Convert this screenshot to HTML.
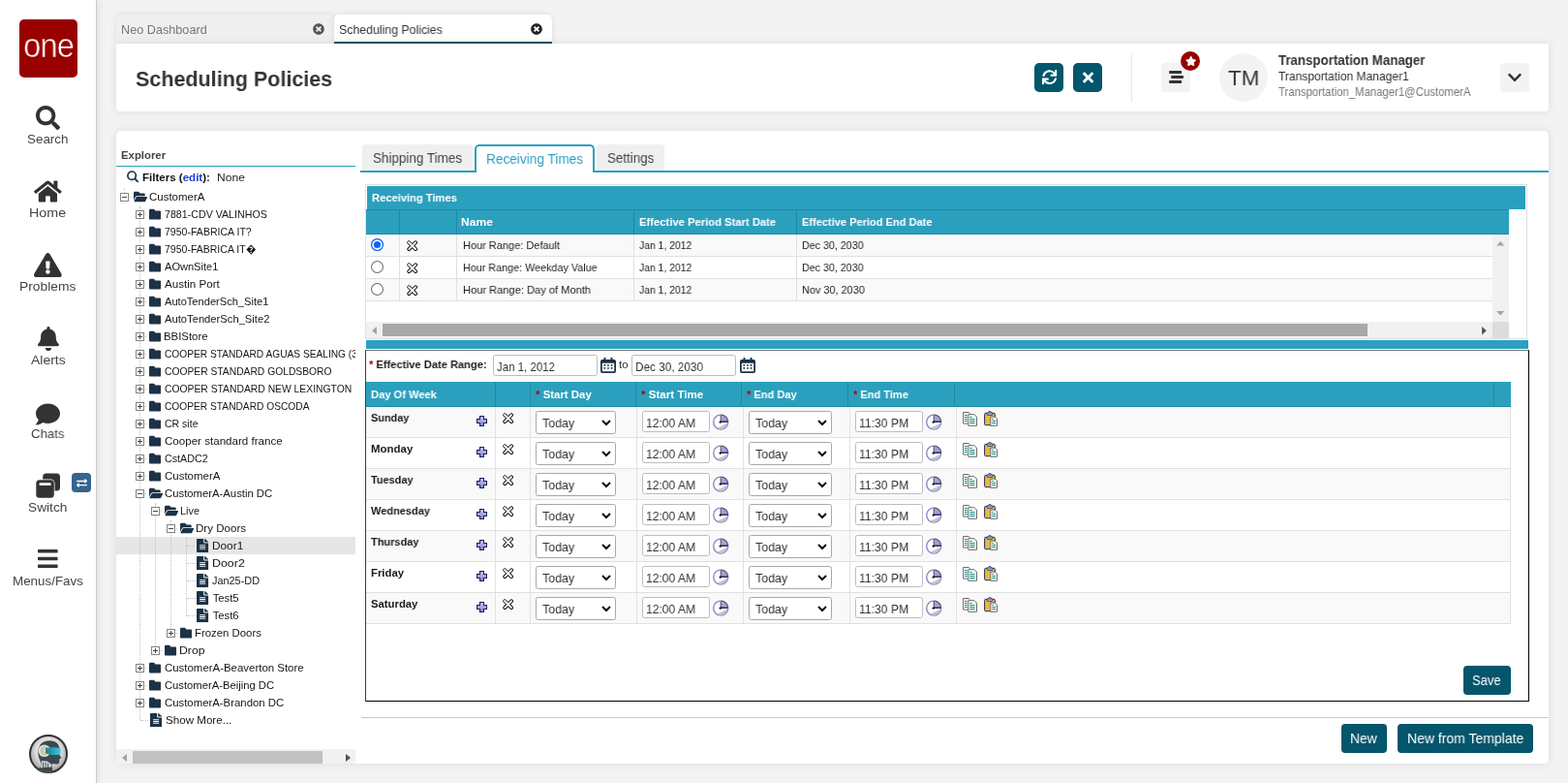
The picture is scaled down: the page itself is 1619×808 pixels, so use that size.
<!DOCTYPE html><html lang="en"><head><meta charset="utf-8"><title>Scheduling Policies</title><style>*{box-sizing:border-box}
html,body{margin:0;padding:0}
html{background:#f3f3f3}
body{width:1619px;height:808px;background:#f3f3f3;font-family:"Liberation Sans",sans-serif;color:#333;font-size:11px}
#app{position:relative;width:1619px;height:808px;overflow:hidden;background:#f3f3f3}
.a{position:absolute}
.ic{position:absolute;display:block;overflow:visible}
.t{position:absolute;white-space:pre;line-height:1;transform-origin:0 0;will-change:transform}
.tl{position:absolute;white-space:pre;line-height:1;transform-origin:0 0}
#side{left:0;top:0;width:100px;height:808px;background:#fff;border-right:1px solid #c9c9c9;box-shadow:2px 0 8px rgba(0,0,0,.08)}
#logo{left:20px;top:20px;width:60px;height:60px;background:#990000;border-radius:5px}
.tab{position:absolute;top:15px;height:30px;border-radius:5px 5px 0 0;font-size:12px}
#hdr{left:120px;top:45px;width:1479px;height:70px;background:#fff;border-radius:0 0 4px 4px;box-shadow:0 0 10px rgba(0,0,0,.10)}
#main{left:120px;top:135px;width:1479px;height:653px;background:#fff;border-radius:5px;box-shadow:0 0 10px rgba(0,0,0,.10)}
.tg{position:absolute;width:9px;height:9px;border:1px solid #848484;background:#fff}
.tg:before{content:"";position:absolute;left:1px;top:3px;width:5px;height:1px;background:#444}
.tg.p:after{content:"";position:absolute;left:3px;top:1px;width:1px;height:5px;background:#444}
.vl{position:absolute;width:0;border-left:1px dotted #c2c2c2}
.hl{position:absolute;height:0;border-top:1px dotted #c2c2c2}
.cs{position:absolute;width:1px;background:#2188a3}
.row{position:absolute;border-bottom:1px solid #e0e0e0}
</style></head><body>
<div id="app">
<svg width="0" height="0" style="position:absolute"><defs><symbol id="i-search" viewBox="0 0 512 512" preserveAspectRatio="none"><path d="M505 442.7L405.3 343c-4.5-4.5-10.6-7-17-7H372c27.6-35.3 44-79.7 44-128C416 93.1 322.9 0 208 0S0 93.1 0 208s93.1 208 208 208c48.3 0 92.7-16.4 128-44v16.3c0 6.4 2.5 12.5 7 17l99.7 99.7c9.4 9.4 24.6 9.4 33.9 0l28.3-28.3c9.4-9.4 9.4-24.6.1-34zM208 336c-70.7 0-128-57.2-128-128 0-70.7 57.2-128 128-128 70.7 0 128 57.2 128 128 0 70.7-57.2 128-128 128z"/></symbol><symbol id="i-home" viewBox="0 0 576 512" preserveAspectRatio="none"><path d="M280.37 148.26L96 300.11V464a16 16 0 0 0 16 16l112.06-.29a16 16 0 0 0 15.92-16V368a16 16 0 0 1 16-16h64a16 16 0 0 1 16 16v95.64a16 16 0 0 0 16 16.05L464 480a16 16 0 0 0 16-16V300L295.67 148.26a12.19 12.19 0 0 0-15.3 0zM571.6 251.47L488 182.56V44.05a12 12 0 0 0-12-12h-56a12 12 0 0 0-12 12v72.61L318.47 43a48 48 0 0 0-61 0L4.34 251.47a12 12 0 0 0-1.6 16.9l25.5 31A12 12 0 0 0 45.15 301l235.22-193.74a12.19 12.19 0 0 1 15.3 0L530.9 301a12 12 0 0 0 16.9-1.6l25.5-31a12 12 0 0 0-1.7-16.93z"/></symbol><symbol id="i-warn" viewBox="0 0 576 512" preserveAspectRatio="none"><path d="M569.517 440.013C587.975 472.007 564.806 512 527.94 512H48.054c-36.937 0-59.999-40.055-41.577-71.987L246.423 23.985c18.467-32.009 64.72-31.951 83.154 0l239.94 416.028zM288 354c-25.405 0-46 20.595-46 46s20.595 46 46 46 46-20.595 46-46-20.595-46-46-46zm-43.673-165.346l7.418 136c.347 6.364 5.609 11.346 11.982 11.346h48.546c6.373 0 11.635-4.982 11.982-11.346l7.418-136c.375-6.874-5.098-12.654-11.982-12.654h-63.383c-6.884 0-12.356 5.78-11.981 12.654z"/></symbol><symbol id="i-bell" viewBox="0 0 448 512" preserveAspectRatio="none"><path d="M224 512c35.32 0 63.97-28.65 63.97-64H160.03c0 35.35 28.65 64 63.97 64zm215.39-149.71c-19.32-20.76-55.47-51.99-55.47-154.29 0-77.7-54.48-139.9-127.94-155.16V32c0-17.67-14.32-32-31.98-32s-31.98 14.33-31.98 32v20.84C118.56 68.1 64.08 130.3 64.08 208c0 102.3-36.15 133.53-55.47 154.29-6 6.45-8.66 14.16-8.61 21.71.11 16.4 12.98 32 32.1 32h383.8c19.12 0 32-15.6 32.1-32 .05-7.55-2.61-15.27-8.61-21.71z"/></symbol><symbol id="i-comment" viewBox="0 0 512 512" preserveAspectRatio="none"><path d="M256 32C114.6 32 0 125.1 0 240c0 49.6 21.4 95 57 130.7C44.5 421.1 2.7 466 2.2 466.5c-2.2 2.3-2.8 5.7-1.5 8.7S4.8 480 8 480c66.3 0 116-31.8 140.6-51.4 32.7 12.3 69 19.4 107.4 19.4 141.4 0 256-93.1 256-208S397.4 32 256 32z"/></symbol><symbol id="i-bars" viewBox="0 0 448 512" preserveAspectRatio="none"><path d="M16 132h416c8.837 0 16-7.163 16-16V76c0-8.837-7.163-16-16-16H16C7.163 60 0 67.163 0 76v40c0 8.837 7.163 16 16 16zm0 160h416c8.837 0 16-7.163 16-16v-40c0-8.837-7.163-16-16-16H16c-8.837 0-16 7.163-16 16v40c0 8.837 7.163 16 16 16zm0 160h416c8.837 0 16-7.163 16-16v-40c0-8.837-7.163-16-16-16H16c-8.837 0-16 7.163-16 16v40c0 8.837 7.163 16 16 16z"/></symbol><symbol id="i-times" viewBox="0 0 352 512" preserveAspectRatio="none"><path d="M242.72 256l100.07-100.07c12.28-12.28 12.28-32.19 0-44.48l-22.24-22.24c-12.28-12.28-32.19-12.28-44.48 0L176 189.28 75.93 89.21c-12.28-12.28-32.19-12.28-44.48 0L9.21 111.45c-12.28 12.28-12.28 32.19 0 44.48L109.28 256 9.21 356.07c-12.28 12.28-12.28 32.19 0 44.48l22.24 22.24c12.28 12.28 32.2 12.28 44.48 0L176 322.72l100.07 100.07c12.28 12.28 32.2 12.28 44.48 0l22.24-22.24c12.28-12.28 12.28-32.19 0-44.48L242.72 256z"/></symbol><symbol id="i-chev" viewBox="0 0 448 512" preserveAspectRatio="none"><path d="M207.029 381.476L12.686 187.132c-9.373-9.373-9.373-24.569 0-33.941l22.667-22.667c9.357-9.357 24.522-9.375 33.901-.04L224 284.505l154.745-154.021c9.379-9.335 24.544-9.317 33.901.04l22.667 22.667c9.373 9.373 9.373 24.569 0 33.941L240.971 381.476c-9.373 9.372-24.569 9.372-33.942 0z"/></symbol><symbol id="i-tcirc" viewBox="0 0 512 512" preserveAspectRatio="none"><path d="M256 8C119 8 8 119 8 256s111 248 248 248 248-111 248-248S393 8 256 8zm121.6 313.1c4.7 4.7 4.7 12.3 0 17L338 377.6c-4.7 4.7-12.3 4.7-17 0L256 312l-65.1 65.6c-4.7 4.7-12.3 4.7-17 0L134.4 338c-4.7-4.7-4.7-12.3 0-17l65.6-65-65.6-65.1c-4.7-4.7-4.7-12.3 0-17l39.6-39.6c4.7-4.7 12.3-4.7 17 0l65 65.7 65.1-65.6c4.7-4.7 12.3-4.7 17 0l39.6 39.6c4.7 4.7 4.7 12.3 0 17L312 256l65.600 65.100z"/></symbol><symbol id="i-folder" viewBox="0 0 512 512" preserveAspectRatio="none"><path d="M464 128H272l-64-64H48C21.49 64 0 85.49 0 112v288c0 26.51 21.49 48 48 48h416c26.51 0 48-21.49 48-48V176c0-26.51-21.49-48-48-48z"/></symbol><symbol id="i-fopen" viewBox="0 0 576 512" preserveAspectRatio="none"><path d="M572.694 292.093L500.27 416.248A63.997 63.997 0 0 1 444.989 448H45.025c-18.523 0-30.064-20.093-20.731-36.093l72.424-124.155A64 64 0 0 1 152 256h399.964c18.523 0 30.064 20.093 20.73 36.093zM152 224h328v-48c0-26.51-21.49-48-48-48H272l-64-64H48C21.49 64 0 85.49 0 112v278.046l69.077-118.418C86.214 242.25 117.989 224 152 224z"/></symbol><symbol id="i-file" viewBox="0 0 384 512" preserveAspectRatio="none"><path d="M224 136V0H24C10.7 0 0 10.7 0 24v464c0 13.3 10.7 24 24 24h336c13.3 0 24-10.7 24-24V160H248c-13.2 0-24-10.8-24-24zm64 236c0 6.6-5.4 12-12 12H108c-6.6 0-12-5.4-12-12v-8c0-6.6 5.4-12 12-12h168c6.6 0 12 5.4 12 12v8zm0-64c0 6.6-5.4 12-12 12H108c-6.6 0-12-5.4-12-12v-8c0-6.6 5.4-12 12-12h168c6.6 0 12 5.4 12 12v8zm0-72v8c0 6.6-5.4 12-12 12H108c-6.6 0-12-5.4-12-12v-8c0-6.6 5.4-12 12-12h168c6.6 0 12 5.4 12 12zm96-114.1v6.1H256V0h6.1c6.4 0 12.5 2.5 17 7l97.9 98c4.500 4.500 7 10.600 7 16.900z"/></symbol><symbol id="i-sync" viewBox="0 0 512 512" preserveAspectRatio="none"><path d="M440.65 12.57l4 82.77A247.16 247.16 0 0 0 255.83 8C134.73 8 33.91 94.92 12.29 209.82A12 12 0 0 0 24.09 224h49.05a12 12 0 0 0 11.67-9.26 175.91 175.91 0 0 1 317-56.94l-101.46-4.86a12 12 0 0 0-12.57 12v47.41a12 12 0 0 0 12 12H500a12 12 0 0 0 12-12V12a12 12 0 0 0-12-12h-47.37a12 12 0 0 0-11.98 12.57zM255.83 432a175.61 175.61 0 0 1-146-77.8l101.8 4.87a12 12 0 0 0 12.57-12v-47.4a12 12 0 0 0-12-12H12a12 12 0 0 0-12 12V500a12 12 0 0 0 12 12h47.35a12 12 0 0 0 12-12.6l-4.15-82.57A247.17 247.17 0 0 0 255.83 504c121.11 0 221.93-86.92 243.55-201.82a12 12 0 0 0-11.8-14.18h-49.05a12 12 0 0 0-11.67 9.26A175.86 175.86 0 0 1 255.83 432z"/></symbol><symbol id="i-star" viewBox="0 0 576 512" preserveAspectRatio="none"><path d="M259.3 17.8L194 150.2 47.9 171.5c-26.2 3.8-36.7 36.1-17.7 54.6l105.7 103-25 145.5c-4.5 26.3 23.2 46 46.4 33.7L288 439.6l130.7 68.7c23.2 12.2 50.9-7.4 46.4-33.7l-25-145.5 105.7-103c19-18.5 8.5-50.8-17.7-54.600L382 150.2 316.7 17.8c-11.7-23.600-45.600-23.900-57.400 0z"/></symbol><symbol id="i-exch" viewBox="0 0 512 512" preserveAspectRatio="none"><path d="M0 168v-16c0-13.255 10.745-24 24-24h360V80c0-21.367 25.899-32.042 40.971-16.971l80 80c9.372 9.373 9.372 24.569 0 33.941l-80 80C409.956 271.982 384 261.456 384 240v-48H24c-13.255 0-24-10.745-24-24zm488 152H128v-48c0-21.314-25.862-32.08-40.971-16.971l-80 80c-9.372 9.373-9.372 24.569 0 33.941l80 80C102.057 463.997 128 453.437 128 432v-48h360c13.255 0 24-10.745 24-24v-16c0-13.255-10.745-24-24-24z"/></symbol><symbol id="i-cal" viewBox="0 0 448 512" preserveAspectRatio="none"><path d="M0 464c0 26.5 21.5 48 48 48h352c26.5 0 48-21.5 48-48V192H0v272zm320-196c0-6.6 5.4-12 12-12h40c6.6 0 12 5.4 12 12v40c0 6.6-5.4 12-12 12h-40c-6.6 0-12-5.4-12-12v-40zm0 128c0-6.6 5.4-12 12-12h40c6.6 0 12 5.4 12 12v40c0 6.6-5.4 12-12 12h-40c-6.6 0-12-5.4-12-12v-40zM192 268c0-6.6 5.4-12 12-12h40c6.6 0 12 5.4 12 12v40c0 6.6-5.4 12-12 12h-40c-6.6 0-12-5.4-12-12v-40zm0 128c0-6.6 5.4-12 12-12h40c6.6 0 12 5.4 12 12v40c0 6.6-5.4 12-12 12h-40c-6.6 0-12-5.4-12-12v-40zM64 268c0-6.6 5.4-12 12-12h40c6.6 0 12 5.4 12 12v40c0 6.6-5.4 12-12 12H76c-6.6 0-12-5.4-12-12v-40zm0 128c0-6.6 5.4-12 12-12h40c6.6 0 12 5.4 12 12v40c0 6.6-5.4 12-12 12H76c-6.6 0-12-5.4-12-12v-40zM400 64h-48V16c0-8.8-7.2-16-16-16h-32c-8.8 0-16 7.2-16 16v48H160V16c0-8.8-7.2-16-16-16h-32c-8.8 0-16 7.2-16 16v48H48C21.5 64 0 85.5 0 112v48h448v-48c0-26.5-21.5-48-48-48z"/></symbol><symbol id="i-x" viewBox="0 0 12 12"><g transform="rotate(45 6 6)"><rect x="-0.6" y="4.5" width="13.2" height="3" rx="1.5" fill="#fff" stroke="#000" stroke-width="1"/></g><g transform="rotate(-45 6 6)"><rect x="-0.6" y="4.5" width="13.2" height="3" rx="1.5" fill="#fff" stroke="#000" stroke-width="1"/></g><g transform="rotate(45 6 6)"><rect x="-0.1" y="5" width="12.2" height="2" rx="1" fill="#fff"/></g></symbol><symbol id="i-plus" viewBox="0 0 11 11"><g shape-rendering="crispEdges"><rect x="3" y="0" width="5" height="11" fill="#1e1e5c"/><rect x="0" y="3" width="11" height="5" fill="#1e1e5c"/><rect x="4" y="1" width="3" height="9" fill="#a4a4de"/><rect x="1" y="4" width="9" height="3" fill="#a4a4de"/><rect x="4" y="1" width="3" height="3" fill="#b8b8ee"/><rect x="4" y="7" width="3" height="3" fill="#8c8cc8"/></g></symbol><symbol id="i-clock" viewBox="0 0 17 17"><circle cx="8.2" cy="8.6" r="7.5" fill="#fff" stroke="#8a8acc" stroke-width="1.4"/><path d="M15.2 9.4A7 7 0 0 1 4.6 14.6L9.300 12.400Z" fill="#c4c4c4"/><path d="M8.4 8.6V1.800A6.800 6.800 0 0 1 15.200 8.600Z" fill="#a2a2dc"/><path d="M8.6 1.200A7.400 7.400 0 0 1 15.700 8.400" fill="none" stroke="#5a5a6a" stroke-width="1.300"/><path d="M8.200 1.600V8.600" stroke="#555" stroke-width="1.100" fill="none"/><path d="M8.200 8.200H15.400" stroke="#2a2a66" stroke-width="1.500" fill="none"/><path d="M6.600 8.600h2.200M7.900 7.500v2.200" stroke="#000" stroke-width="1.100" fill="none"/></symbol><symbol id="i-copy" viewBox="0 0 17 17"><path d="M1.6 1.5H7.2L8.4 2.7V13.1H1.6Z" fill="#fffef6" stroke="#6a6a6a" stroke-width="1"/><path d="M3 4.5h2.6M3 6.5h2.6M3 8.5h2.6M3 10.5h2.6" stroke="#0a8a8a" stroke-width="1"/><path d="M6.8 3.7H13L15.5 6.2V15.3H6.8Z" fill="#fffef6" stroke="#6a6a6a" stroke-width="1"/><path d="M8.3 6.5h2.4M8.3 8.500h5.200M8.3 10.5h5.200M8.300 12.500h5.200" stroke="#0a8a8a" stroke-width="1"/></symbol><symbol id="i-paste" viewBox="0 0 17 17"><circle cx="7" cy="1.700" r="1.400" fill="none" stroke="#3a5a9a" stroke-width="0.900"/><rect x="1.600" y="2.300" width="10.800" height="12.400" rx="1.200" fill="#e3bb40" stroke="#2a2a66" stroke-width="1"/><rect x="4" y="2" width="6" height="2.300" rx="0.600" fill="#c8c8c8" stroke="#2a2a66" stroke-width="0.900"/><path d="M7.800 6.200H12.600L14.500 8.100V15.300H7.800Z" fill="#fff" stroke="#6a6a6a" stroke-width="1"/><path d="M9.300 8.500h1.600M9.300 10.500h3.800M9.300 12.500h3.800" stroke="#0a8a8a" stroke-width="1"/></symbol><symbol id="i-cal2" viewBox="0 0 16 16"><rect x="3.500" y="0" width="2" height="3.500" rx="0.500"/><rect x="10.500" y="0" width="2" height="3.500" rx="0.500"/><path d="M2 2h12a2 2 0 0 1 2 2v10a2 2 0 0 1-2 2H2a2 2 0 0 1-2-2V4a2 2 0 0 1 2-2zM1.800 5.800v7.900a0.500 0.500 0 0 0 0.500 0.500h11.400a0.500 0.500 0 0 0 0.500-0.500V5.800z" fill-rule="evenodd"/><rect x="3.500" y="7.100" width="1.700" height="1.700" rx="0.400"/><rect x="7.100" y="7.100" width="1.700" height="1.700" rx="0.400"/><rect x="10.700" y="7.100" width="1.700" height="1.700" rx="0.400"/><rect x="3.500" y="10.100" width="1.700" height="1.700" rx="0.400"/><rect x="7.100" y="10.100" width="1.700" height="1.700" rx="0.400"/><rect x="10.700" y="10.100" width="1.700" height="1.700" rx="0.400"/></symbol></defs></svg>
<div id="side" class="a"></div>
<div id="logo" class="a"><span class="t" style="left:3.6px;top:9.5px;font-size:35.5px;letter-spacing:-1px;color:#fff;transform:scaleX(0.925);-webkit-text-stroke:0.6px #990000">one</span></div>
<svg class="ic" style="left:37px;top:108.5px;width:25px;height:25px;fill:#333;"><use href="#i-search"/></svg>
<span class="t" style="left:28.24px;top:137px;font-size:13.4px;color:#444;transform:scaleX(0.996);">Search</span>
<svg class="ic" style="left:35.1px;top:184.5px;width:28.8px;height:25px;fill:#333;"><use href="#i-home"/></svg>
<span class="t" style="left:30.47px;top:213px;font-size:13.4px;color:#444;transform:scaleX(1.067);">Home</span>
<svg class="ic" style="left:35.1px;top:260.5px;width:28.8px;height:25px;fill:#333;"><use href="#i-warn"/></svg>
<span class="t" style="left:20.09px;top:289px;font-size:13.4px;color:#444;transform:scaleX(1.032);">Problems</span>
<svg class="ic" style="left:38.5px;top:336.5px;width:21.9px;height:25px;fill:#333;"><use href="#i-bell"/></svg>
<span class="t" style="left:31.57px;top:365px;font-size:13.4px;color:#444;transform:scaleX(1.043);">Alerts</span>
<svg class="ic" style="left:37px;top:414.5px;width:25px;height:25px;fill:#333;"><use href="#i-comment"/></svg>
<span class="t" style="left:32.3px;top:441px;font-size:13.4px;color:#444;transform:scaleX(0.985);">Chats</span>
<svg class="ic" style="left:36.8px;top:487.7px;width:25px;height:26px" viewBox="0 0 25 26"><rect x="7.2" y="0.5" width="17.8" height="18" rx="3.5" fill="#333"/><rect x="-0.4" y="6.6" width="19.9" height="19.9" rx="4.2" fill="#fff"/><rect x="0.3" y="7.3" width="18.5" height="18.5" rx="3.5" fill="#333"/><rect x="3.6" y="10.3" width="12" height="2.7" rx="0.5" fill="#fff"/></svg>
<span class="t" style="left:28.73px;top:517px;font-size:13.4px;color:#444;transform:scaleX(1.025);">Switch</span>
<svg class="ic" style="left:39px;top:563.8px;width:20.8px;height:25px;fill:#333;"><use href="#i-bars"/></svg>
<span class="t" style="left:12.85px;top:593px;font-size:13.4px;color:#444;">Menus/Favs</span>
<div class="a" style="left:74px;top:488px;width:20px;height:20px;border-radius:4px;background:#36648b"></div>
<svg class="ic" style="left:78.5px;top:492.5px;width:11px;height:11px;fill:#fff;"><use href="#i-exch"/></svg>
<svg class="ic" style="left:30px;top:758px;width:40px;height:40px" viewBox="0 0 40 40"><defs><radialGradient id="rg" cx="50%" cy="42%" r="58%"><stop offset="0" stop-color="#fbfbfb"/><stop offset="0.55" stop-color="#e2e2e2"/><stop offset="0.85" stop-color="#b4b4b4"/><stop offset="1" stop-color="#8a8a8a"/></radialGradient><linearGradient id="vg" x1="0" y1="0" x2="1" y2="0"><stop offset="0" stop-color="#1c7f98"/><stop offset="1" stop-color="#3fc6de"/></linearGradient><clipPath id="ac"><circle cx="20" cy="20" r="18.6"/></clipPath></defs><circle cx="20" cy="20" r="19" fill="url(#rg)" stroke="#333" stroke-width="2"/><g clip-path="url(#ac)"><path d="M11 26C8.500 21 8.500 12 13.500 8.500C18 5.300 26 5.600 29.500 9.500C31.200 11.500 31.600 14 31.500 16L31.500 21L33.300 24.300L31.400 25.200L31.200 28.500C31 30.300 29.500 30.800 27.500 30.500L24 30L23.500 39H10.500L12.500 30Z" fill="#3a4a52"/><path d="M13 27L11 39H23L23.500 31L19 27.500Z" fill="#c4cacd"/><path d="M14.500 29V39M17 29V39M19.500 30V39" stroke="#4a555a" stroke-width="0.900" fill="none"/><path d="M10 34.500L24 33.500V40H9Z" fill="#39474e"/><circle cx="15.800" cy="16.800" r="6.300" fill="#d9dee0"/><circle cx="16.300" cy="16.600" r="3.900" fill="none" stroke="#c9a550" stroke-width="0.900"/><circle cx="16.300" cy="16.600" r="2" fill="none" stroke="#c9a550" stroke-width="0.800"/><path d="M17 14.300C21 12.800 28 13 32.500 14.200V20.500C28 21.600 21 21.200 17 19Z" fill="url(#vg)"/></g></svg>
<div class="tab" style="left:120px;width:225px;background:#efefef;box-shadow:0 0 6px rgba(0,0,0,.10)"></div>
<div class="tab" style="left:345px;width:225px;background:#fff;border-bottom:2px solid #04576b;box-shadow:0 0 6px rgba(0,0,0,.10)"></div>
<span class="t" style="left:125.47px;top:25px;font-size:12.4px;color:#777;transform:scaleX(1.022);">Neo Dashboard</span>
<svg class="ic" style="left:323px;top:24px;width:12px;height:12px;fill:#555;"><use href="#i-tcirc"/></svg>
<span class="t" style="left:350.45px;top:25px;font-size:12.4px;transform:scaleX(0.994);">Scheduling Policies</span>
<svg class="ic" style="left:548px;top:24px;width:12px;height:12px;fill:#222;"><use href="#i-tcirc"/></svg>
<div id="hdr" class="a"></div>
<span class="t" style="left:139.79px;top:71px;font-size:22.6px;font-weight:bold;transform:scaleX(0.952);">Scheduling Policies</span>
<div class="a" style="left:1068px;top:65px;width:30px;height:30px;background:#03566b;border-radius:5px"></div>
<svg class="ic" style="left:1075.7px;top:71.9px;width:15.4px;height:15.3px;fill:#fff;"><use href="#i-sync"/></svg>
<div class="a" style="left:1108px;top:65px;width:30px;height:30px;background:#03566b;border-radius:5px"></div>
<svg class="ic" style="left:1117.9px;top:71.5px;width:11.1px;height:16px;fill:#fff;"><use href="#i-times"/></svg>
<div class="a" style="left:1168px;top:55px;width:1px;height:50px;background:#e6e6e6"></div>
<div class="a" style="left:1199px;top:65px;width:30px;height:30px;border-radius:4px;background:#f3f3f3"></div>
<svg class="ic" style="left:1207px;top:73px;width:16px;height:13px" viewBox="0 0 16 13"><rect x="0.1" y="0.1" width="13" height="2.8" rx="0.7" fill="#333"/><rect x="2.2" y="5.1" width="12.8" height="2.8" rx="0.7" fill="#333"/><rect x="0.1" y="10.1" width="13" height="2.8" rx="0.7" fill="#333"/></svg>
<div class="a" style="left:1219px;top:53px;width:20px;height:20px;border-radius:50%;background:#990000"></div>
<svg class="ic" style="left:1223.6px;top:58.1px;width:11.4px;height:10.1px;fill:#fff;"><use href="#i-star"/></svg>
<div class="a" style="left:1259px;top:55px;width:50px;height:50px;border-radius:50%;background:#f3f3f3"></div>
<span class="t" style="left:1268.25px;top:69px;font-size:22.8px;transform:scaleX(0.980);">TM</span>
<span class="t" style="left:1319.6px;top:56px;font-size:13.9px;font-weight:bold;transform:scaleX(0.957);">Transportation Manager</span>
<span class="t" style="left:1319.55px;top:73px;font-size:12.4px;transform:scaleX(0.972);">Transportation Manager1</span>
<span class="t" style="left:1319.53px;top:89px;font-size:12.4px;color:#777;transform:scaleX(0.916);">Transportation_Manager1@CustomerA</span>
<div class="a" style="left:1549px;top:65px;width:30px;height:30px;border-radius:4px;background:#f3f3f3"></div>
<svg class="ic" style="left:1557px;top:72px;width:14px;height:16px;fill:#333;"><use href="#i-chev"/></svg>
<div id="main" class="a"></div>
<span class="t" style="left:124.62px;top:155px;font-size:11.3px;font-weight:bold;color:#444;transform:scaleX(1.006);">Explorer</span>
<div class="a" style="left:120px;top:171px;width:247px;height:1px;background:#2ba0be"></div>
<svg class="ic" style="left:130px;top:175px;width:14px;height:14px" viewBox="0 0 14 14"><circle cx="6.1" cy="6.2" r="4.2" fill="none" stroke="#1c3246" stroke-width="1.7"/><path d="M9.3 9.5L12.1 12.3" stroke="#1c3246" stroke-width="1.8" stroke-linecap="round"/></svg>
<span class="t" style="left:147.16px;top:178px;font-size:11.3px;font-weight:bold;color:#111;transform:scaleX(1.021);">Filters (<span style="color:#1a3fcf">edit</span>):</span>
<span class="t" style="left:223.82px;top:178px;font-size:11.3px;color:#222;transform:scaleX(1.068);">None</span>
<div class="a" style="left:120px;top:194px;width:247px;height:575px;overflow:hidden">
<div class="a" style="left:0px;top:360px;width:247px;height:18px;background:#e6e6e6"></div>
<div class="vl" style="left:8px;top:0px;height:5px"></div>
<div class="vl" style="left:24px;top:19px;height:530px"></div>
<div class="vl" style="left:40px;top:325px;height:152px"></div>
<div class="vl" style="left:56px;top:343px;height:116px"></div>
<div class="vl" style="left:72px;top:361px;height:80px"></div>
<span class="tg" style="left:4px;top:5px"></span>
<span class="hl" style="left:14px;top:9px;width:1px"></span>
<svg class="ic" style="left:18.1px;top:1.5px;width:14.1px;height:14.1px;fill:#1c3246;"><use href="#i-fopen"/></svg>
<span class="tl" style="left:34.3px;top:4px;font-size:11.3px;color:#161616;transform:scaleX(1.016);">CustomerA</span>
<span class="tg p" style="left:20px;top:23px"></span>
<span class="hl" style="left:30px;top:27px;width:1px"></span>
<svg class="ic" style="left:34.3px;top:19.6px;width:12.2px;height:14.4px;fill:#1c3246;"><use href="#i-folder"/></svg>
<span class="tl" style="left:49.82px;top:22px;font-size:11.3px;color:#161616;transform:scaleX(0.943);">7881-CDV VALINHOS</span>
<span class="tg p" style="left:20px;top:41px"></span>
<span class="hl" style="left:30px;top:45px;width:1px"></span>
<svg class="ic" style="left:34.3px;top:37.6px;width:12.2px;height:14.4px;fill:#1c3246;"><use href="#i-folder"/></svg>
<span class="tl" style="left:49.92px;top:40px;font-size:11.3px;color:#161616;transform:scaleX(0.934);">7950-FABRICA IT?</span>
<span class="tg p" style="left:20px;top:59px"></span>
<span class="hl" style="left:30px;top:63px;width:1px"></span>
<svg class="ic" style="left:34.3px;top:55.6px;width:12.2px;height:14.4px;fill:#1c3246;"><use href="#i-folder"/></svg>
<span class="tl" style="left:50.3px;top:58px;font-size:11.3px;color:#161616;transform:scaleX(0.931);">7950-FABRICA IT�</span>
<span class="tg p" style="left:20px;top:77px"></span>
<span class="hl" style="left:30px;top:81px;width:1px"></span>
<svg class="ic" style="left:34.3px;top:73.6px;width:12.2px;height:14.4px;fill:#1c3246;"><use href="#i-folder"/></svg>
<span class="tl" style="left:49.87px;top:76px;font-size:11.3px;color:#161616;transform:scaleX(0.979);">AOwnSite1</span>
<span class="tg p" style="left:20px;top:95px"></span>
<span class="hl" style="left:30px;top:99px;width:1px"></span>
<svg class="ic" style="left:34.3px;top:91.6px;width:12.2px;height:14.4px;fill:#1c3246;"><use href="#i-folder"/></svg>
<span class="tl" style="left:50.3px;top:94px;font-size:11.3px;color:#161616;transform:scaleX(1.027);">Austin Port</span>
<span class="tg p" style="left:20px;top:113px"></span>
<span class="hl" style="left:30px;top:117px;width:1px"></span>
<svg class="ic" style="left:34.3px;top:109.6px;width:12.2px;height:14.4px;fill:#1c3246;"><use href="#i-folder"/></svg>
<span class="tl" style="left:50.09px;top:112px;font-size:11.3px;color:#161616;transform:scaleX(0.982);">AutoTenderSch_Site1</span>
<span class="tg p" style="left:20px;top:131px"></span>
<span class="hl" style="left:30px;top:135px;width:1px"></span>
<svg class="ic" style="left:34.3px;top:127.6px;width:12.2px;height:14.4px;fill:#1c3246;"><use href="#i-folder"/></svg>
<span class="tl" style="left:49.53px;top:130px;font-size:11.3px;color:#161616;transform:scaleX(0.992);">AutoTenderSch_Site2</span>
<span class="tg p" style="left:20px;top:149px"></span>
<span class="hl" style="left:30px;top:153px;width:1px"></span>
<svg class="ic" style="left:34.3px;top:145.6px;width:12.2px;height:14.4px;fill:#1c3246;"><use href="#i-folder"/></svg>
<span class="tl" style="left:48.98px;top:148px;font-size:11.3px;color:#161616;transform:scaleX(1.006);">BBIStore</span>
<span class="tg p" style="left:20px;top:167px"></span>
<span class="hl" style="left:30px;top:171px;width:1px"></span>
<svg class="ic" style="left:34.3px;top:163.6px;width:12.2px;height:14.4px;fill:#1c3246;"><use href="#i-folder"/></svg>
<span class="tl" style="left:50.3px;top:166px;font-size:11.3px;color:#161616;transform:scaleX(0.901);">COOPER STANDARD AGUAS SEALING (3)</span>
<span class="tg p" style="left:20px;top:185px"></span>
<span class="hl" style="left:30px;top:189px;width:1px"></span>
<svg class="ic" style="left:34.3px;top:181.6px;width:12.2px;height:14.4px;fill:#1c3246;"><use href="#i-folder"/></svg>
<span class="tl" style="left:50.17px;top:184px;font-size:11.3px;color:#161616;transform:scaleX(0.911);">COOPER STANDARD GOLDSBORO</span>
<span class="tg p" style="left:20px;top:203px"></span>
<span class="hl" style="left:30px;top:207px;width:1px"></span>
<svg class="ic" style="left:34.3px;top:199.6px;width:12.2px;height:14.4px;fill:#1c3246;"><use href="#i-folder"/></svg>
<span class="tl" style="left:50.41px;top:202px;font-size:11.3px;color:#161616;transform:scaleX(0.915);">COOPER STANDARD NEW LEXINGTON</span>
<span class="tg p" style="left:20px;top:221px"></span>
<span class="hl" style="left:30px;top:225px;width:1px"></span>
<svg class="ic" style="left:34.3px;top:217.6px;width:12.2px;height:14.4px;fill:#1c3246;"><use href="#i-folder"/></svg>
<span class="tl" style="left:50.06px;top:220px;font-size:11.3px;color:#161616;transform:scaleX(0.903);">COOPER STANDARD OSCODA</span>
<span class="tg p" style="left:20px;top:239px"></span>
<span class="hl" style="left:30px;top:243px;width:1px"></span>
<svg class="ic" style="left:34.3px;top:235.6px;width:12.2px;height:14.4px;fill:#1c3246;"><use href="#i-folder"/></svg>
<span class="tl" style="left:50.06px;top:238px;font-size:11.3px;color:#161616;transform:scaleX(0.931);">CR site</span>
<span class="tg p" style="left:20px;top:257px"></span>
<span class="hl" style="left:30px;top:261px;width:1px"></span>
<svg class="ic" style="left:34.3px;top:253.6px;width:12.2px;height:14.4px;fill:#1c3246;"><use href="#i-folder"/></svg>
<span class="tl" style="left:50.11px;top:256px;font-size:11.3px;color:#161616;transform:scaleX(1.025);">Cooper standard france</span>
<span class="tg p" style="left:20px;top:275px"></span>
<span class="hl" style="left:30px;top:279px;width:1px"></span>
<svg class="ic" style="left:34.3px;top:271.6px;width:12.2px;height:14.4px;fill:#1c3246;"><use href="#i-folder"/></svg>
<span class="tl" style="left:50.1px;top:274px;font-size:11.3px;color:#161616;transform:scaleX(0.947);">CstADC2</span>
<span class="tg p" style="left:20px;top:293px"></span>
<span class="hl" style="left:30px;top:297px;width:1px"></span>
<svg class="ic" style="left:34.3px;top:289.6px;width:12.2px;height:14.4px;fill:#1c3246;"><use href="#i-folder"/></svg>
<span class="tl" style="left:50.23px;top:292px;font-size:11.3px;color:#161616;transform:scaleX(1.016);">CustomerA</span>
<span class="tg" style="left:20px;top:311px"></span>
<span class="hl" style="left:30px;top:315px;width:1px"></span>
<svg class="ic" style="left:34.1px;top:307.5px;width:14.1px;height:14.1px;fill:#1c3246;"><use href="#i-fopen"/></svg>
<span class="tl" style="left:50.05px;top:310px;font-size:11.3px;color:#161616;">CustomerA-Austin DC</span>
<span class="tg" style="left:36px;top:329px"></span>
<span class="hl" style="left:46px;top:333px;width:1px"></span>
<svg class="ic" style="left:50.1px;top:325.5px;width:14.1px;height:14.1px;fill:#1c3246;"><use href="#i-fopen"/></svg>
<span class="tl" style="left:66.3px;top:328px;font-size:11.3px;color:#161616;transform:scaleX(0.961);">Live</span>
<span class="tg" style="left:52px;top:347px"></span>
<span class="hl" style="left:62px;top:351px;width:1px"></span>
<svg class="ic" style="left:66.1px;top:343.5px;width:14.1px;height:14.1px;fill:#1c3246;"><use href="#i-fopen"/></svg>
<span class="tl" style="left:82.3px;top:346px;font-size:11.3px;color:#161616;transform:scaleX(1.023);">Dry Doors</span>
<span class="hl" style="left:73px;top:369px;width:8px"></span>
<svg class="ic" style="left:83px;top:362px;width:12.3px;height:14.3px;fill:#1c3246;"><use href="#i-file"/></svg>
<span class="tl" style="left:98.89px;top:364px;font-size:11.3px;color:#161616;transform:scaleX(1.047);">Door1</span>
<span class="hl" style="left:73px;top:387px;width:8px"></span>
<svg class="ic" style="left:83px;top:380px;width:12.3px;height:14.3px;fill:#1c3246;"><use href="#i-file"/></svg>
<span class="tl" style="left:99.06px;top:382px;font-size:11.3px;color:#161616;transform:scaleX(1.098);">Door2</span>
<span class="hl" style="left:73px;top:405px;width:8px"></span>
<svg class="ic" style="left:83px;top:398px;width:12.3px;height:14.3px;fill:#1c3246;"><use href="#i-file"/></svg>
<span class="tl" style="left:99.36px;top:400px;font-size:11.3px;color:#161616;transform:scaleX(0.964);">Jan25-DD</span>
<span class="hl" style="left:73px;top:423px;width:8px"></span>
<svg class="ic" style="left:83px;top:416px;width:12.3px;height:14.3px;fill:#1c3246;"><use href="#i-file"/></svg>
<span class="tl" style="left:99.64px;top:418px;font-size:11.3px;color:#161616;">Test5</span>
<span class="hl" style="left:73px;top:441px;width:8px"></span>
<svg class="ic" style="left:83px;top:434px;width:12.3px;height:14.3px;fill:#1c3246;"><use href="#i-file"/></svg>
<span class="tl" style="left:99.66px;top:436px;font-size:11.3px;color:#161616;">Test6</span>
<span class="tg p" style="left:52px;top:455px"></span>
<span class="hl" style="left:62px;top:459px;width:1px"></span>
<svg class="ic" style="left:66.3px;top:451.6px;width:12.2px;height:14.4px;fill:#1c3246;"><use href="#i-folder"/></svg>
<span class="tl" style="left:80.58px;top:454px;font-size:11.3px;color:#161616;transform:scaleX(1.007);">Frozen Doors</span>
<span class="tg p" style="left:36px;top:473px"></span>
<span class="hl" style="left:46px;top:477px;width:1px"></span>
<svg class="ic" style="left:50.3px;top:469.6px;width:12.2px;height:14.4px;fill:#1c3246;"><use href="#i-folder"/></svg>
<span class="tl" style="left:65.02px;top:472px;font-size:11.3px;color:#161616;transform:scaleX(1.082);">Drop</span>
<span class="tg p" style="left:20px;top:491px"></span>
<span class="hl" style="left:30px;top:495px;width:1px"></span>
<svg class="ic" style="left:34.3px;top:487.6px;width:12.2px;height:14.4px;fill:#1c3246;"><use href="#i-folder"/></svg>
<span class="tl" style="left:50.12px;top:490px;font-size:11.3px;color:#161616;transform:scaleX(1.012);">CustomerA-Beaverton Store</span>
<span class="tg p" style="left:20px;top:509px"></span>
<span class="hl" style="left:30px;top:513px;width:1px"></span>
<svg class="ic" style="left:34.3px;top:505.6px;width:12.2px;height:14.4px;fill:#1c3246;"><use href="#i-folder"/></svg>
<span class="tl" style="left:49.75px;top:508px;font-size:11.3px;color:#161616;transform:scaleX(0.995);">CustomerA-Beijing DC</span>
<span class="tg p" style="left:20px;top:527px"></span>
<span class="hl" style="left:30px;top:531px;width:1px"></span>
<svg class="ic" style="left:34.3px;top:523.6px;width:12.2px;height:14.4px;fill:#1c3246;"><use href="#i-folder"/></svg>
<span class="tl" style="left:49.88px;top:526px;font-size:11.3px;color:#161616;transform:scaleX(1.006);">CustomerA-Brandon DC</span>
<span class="hl" style="left:25px;top:549px;width:8px"></span>
<svg class="ic" style="left:35px;top:542px;width:12.3px;height:14.3px;fill:#1c3246;"><use href="#i-file"/></svg>
<span class="tl" style="left:51.16px;top:544px;font-size:11.3px;color:#161616;transform:scaleX(1.027);">Show More...</span>
</div>
<div class="a" style="left:120px;top:773px;width:247px;height:15px;background:#f1f1f1;border-radius:0 0 0 5px"></div>
<div class="a" style="left:137px;top:775px;width:196px;height:13px;background:#c1c1c1"></div>
<svg class="ic" style="left:125.5px;top:777.5px;width:5px;height:8px" viewBox="0 0 5 8"><path d="M5 0v8L0 4z" fill="#a3a3a3"/></svg>
<svg class="ic" style="left:356.5px;top:777.5px;width:5px;height:8px" viewBox="0 0 5 8"><path d="M0 0v8l5-4z" fill="#505050"/></svg>
<div class="a" style="left:372px;top:176px;width:1227px;height:2px;background:#2ba0be"></div>
<div class="a" style="left:374px;top:149px;width:114px;height:27px;background:#efefef;border-radius:4px 4px 0 0"></div>
<div class="a" style="left:490px;top:149px;width:124px;height:29px;background:#fff;border:2px solid #2ba0be;border-bottom:none;border-radius:5px 5px 0 0"></div>
<div class="a" style="left:616px;top:149px;width:70px;height:27px;background:#efefef;border-radius:4px 4px 0 0"></div>
<span class="t" style="left:385.04px;top:156px;font-size:14.4px;color:#444;transform:scaleX(0.935);">Shipping Times</span>
<span class="t" style="left:501.87px;top:157px;font-size:14.4px;color:#2ba0be;transform:scaleX(0.948);">Receiving Times</span>
<span class="t" style="left:626.73px;top:156px;font-size:14.4px;color:#444;transform:scaleX(0.930);">Settings</span>
<div class="a" style="left:377px;top:190px;width:1200px;height:160px;border:1px solid #e0e0e0;background:#fff"></div>
<div class="a" style="left:379px;top:192px;width:1196px;height:24px;background:#2ba0be"></div>
<span class="t" style="left:383.62px;top:199px;font-size:11.3px;font-weight:bold;color:#fff;transform:scaleX(0.987);">Receiving Times</span>
<div class="a" style="left:378px;top:216px;width:1180px;height:26px;background:#2ba0be;border-bottom:1px solid #2188a3;border-top:1px solid #2188a3"></div>
<div class="cs" style="left:412px;top:216px;height:25px"></div>
<div class="cs" style="left:471px;top:216px;height:25px"></div>
<div class="cs" style="left:654px;top:216px;height:25px"></div>
<div class="cs" style="left:822px;top:216px;height:25px"></div>
<span class="t" style="left:475.92px;top:224px;font-size:11.3px;font-weight:bold;color:#fff;transform:scaleX(1.068);">Name</span>
<span class="t" style="left:659.67px;top:224px;font-size:11.3px;font-weight:bold;color:#fff;transform:scaleX(0.995);">Effective Period Start Date</span>
<span class="t" style="left:827.6px;top:224px;font-size:11.3px;font-weight:bold;color:#fff;transform:scaleX(0.978);">Effective Period End Date</span>
<div class="row" style="left:378px;top:242px;width:1163px;height:23px;background:#f9f9f9"></div>
<div class="a" style="left:412px;top:242px;width:1px;height:22px;background:#e0e0e0"></div>
<div class="a" style="left:471px;top:242px;width:1px;height:22px;background:#e0e0e0"></div>
<div class="a" style="left:654px;top:242px;width:1px;height:22px;background:#e0e0e0"></div>
<div class="a" style="left:822px;top:242px;width:1px;height:22px;background:#e0e0e0"></div>
<svg class="ic" style="left:382px;top:245px;width:15px;height:15px" viewBox="0 0 15 15"><circle cx="7.5" cy="7.5" r="5.9" fill="#fff" stroke="#0a64ff" stroke-width="1.3"/><circle cx="7.5" cy="7.5" r="3.6" fill="#0a64ff"/></svg>
<svg class="ic" style="left:419.9px;top:247.8px;width:11.4px;height:11.4px;fill:#333;"><use href="#i-x"/></svg>
<span class="t" style="left:478.09px;top:248px;font-size:11.3px;color:#222;transform:scaleX(0.972);">Hour Range: Default</span>
<span class="t" style="left:659.8px;top:248px;font-size:11.3px;color:#222;transform:scaleX(0.918);">Jan 1, 2012</span>
<span class="t" style="left:827.56px;top:248px;font-size:11.3px;color:#222;transform:scaleX(0.946);">Dec 30, 2030</span>
<div class="row" style="left:378px;top:265px;width:1163px;height:23px;background:#fff"></div>
<div class="a" style="left:412px;top:265px;width:1px;height:22px;background:#e0e0e0"></div>
<div class="a" style="left:471px;top:265px;width:1px;height:22px;background:#e0e0e0"></div>
<div class="a" style="left:654px;top:265px;width:1px;height:22px;background:#e0e0e0"></div>
<div class="a" style="left:822px;top:265px;width:1px;height:22px;background:#e0e0e0"></div>
<svg class="ic" style="left:382px;top:268px;width:15px;height:15px" viewBox="0 0 15 15"><circle cx="7.5" cy="7.5" r="5.95" fill="#fff" stroke="#6f6f6f" stroke-width="1.1"/></svg>
<svg class="ic" style="left:419.9px;top:270.8px;width:11.4px;height:11.4px;fill:#333;"><use href="#i-x"/></svg>
<span class="t" style="left:477.83px;top:271px;font-size:11.3px;color:#222;transform:scaleX(0.954);">Hour Range: Weekday Value</span>
<span class="t" style="left:659.8px;top:271px;font-size:11.3px;color:#222;transform:scaleX(0.918);">Jan 1, 2012</span>
<span class="t" style="left:827.56px;top:271px;font-size:11.3px;color:#222;transform:scaleX(0.946);">Dec 30, 2030</span>
<div class="row" style="left:378px;top:288px;width:1163px;height:23px;background:#f9f9f9"></div>
<div class="a" style="left:412px;top:288px;width:1px;height:22px;background:#e0e0e0"></div>
<div class="a" style="left:471px;top:288px;width:1px;height:22px;background:#e0e0e0"></div>
<div class="a" style="left:654px;top:288px;width:1px;height:22px;background:#e0e0e0"></div>
<div class="a" style="left:822px;top:288px;width:1px;height:22px;background:#e0e0e0"></div>
<svg class="ic" style="left:382px;top:291px;width:15px;height:15px" viewBox="0 0 15 15"><circle cx="7.5" cy="7.5" r="5.95" fill="#fff" stroke="#6f6f6f" stroke-width="1.1"/></svg>
<svg class="ic" style="left:419.9px;top:293.8px;width:11.4px;height:11.4px;fill:#333;"><use href="#i-x"/></svg>
<span class="t" style="left:477.95px;top:294px;font-size:11.3px;color:#222;transform:scaleX(0.982);">Hour Range: Day of Month</span>
<span class="t" style="left:659.8px;top:294px;font-size:11.3px;color:#222;transform:scaleX(0.918);">Jan 1, 2012</span>
<span class="t" style="left:828.46px;top:294px;font-size:11.3px;color:#222;transform:scaleX(0.964);">Nov 30, 2030</span>
<div class="a" style="left:1541px;top:242px;width:17px;height:90px;background:#f1f1f1"></div>
<svg class="ic" style="left:1545px;top:248.5px;width:8.5px;height:4.5px" viewBox="0 0 9 5"><path d="M0 5h9L4.5 0z" fill="#a3a3a3"/></svg>
<svg class="ic" style="left:1545px;top:320.5px;width:8.5px;height:4.5px" viewBox="0 0 9 5"><path d="M0 0h9L4.5 5z" fill="#a3a3a3"/></svg>
<div class="a" style="left:378px;top:332px;width:1163px;height:17px;background:#f1f1f1"></div>
<div class="a" style="left:395px;top:334px;width:1017px;height:13px;background:#a8a8a8"></div>
<svg class="ic" style="left:384px;top:336.5px;width:5px;height:8.5px" viewBox="0 0 5 9"><path d="M5 0v9L0 4.5z" fill="#a3a3a3"/></svg>
<svg class="ic" style="left:1530px;top:336.5px;width:5px;height:8.5px" viewBox="0 0 5 9"><path d="M0 0v9l5-4.5z" fill="#505050"/></svg>
<div class="a" style="left:1541px;top:332px;width:17px;height:17px;background:#dcdcdc"></div>
<div class="a" style="left:378px;top:351px;width:1200px;height:9px;background:#2ba0be"></div>
<div class="a" style="left:377px;top:361px;width:1202px;height:363px;border:1px solid #000;border-top-color:#767676;border-left-color:#3c3c3c;background:#fff"></div>
<span class="t" style="left:381.16px;top:371px;font-size:11.3px;font-weight:bold;color:#1a1a1a;transform:scaleX(0.983);"><span style="color:#b00000">*</span> Effective Date Range:</span>
<div class="a" style="left:509px;top:366px;width:108px;height:22px;border:1px solid #bdbdbd;border-radius:2.5px;background:#fff"></div>
<span class="t" style="left:512.5px;top:372px;font-size:13.4px;transform:scaleX(0.857);">Jan 1, 2012</span>
<svg class="ic" style="left:620px;top:369px;width:16px;height:16px;fill:#1c3246;"><use href="#i-cal2"/></svg>
<span class="t" style="left:638.75px;top:371px;font-size:11.3px;transform:scaleX(1.013);">to</span>
<div class="a" style="left:652px;top:366px;width:108px;height:22px;border:1px solid #bdbdbd;border-radius:2.5px;background:#fff"></div>
<span class="t" style="left:655.5px;top:372px;font-size:13.4px;transform:scaleX(0.879);">Dec 30, 2030</span>
<svg class="ic" style="left:763.5px;top:369px;width:16px;height:16px;fill:#1c3246;"><use href="#i-cal2"/></svg>
<div class="a" style="left:378px;top:394px;width:1182px;height:26px;background:#2ba0be;border-bottom:1px solid #2188a3"></div>
<div class="cs" style="left:511px;top:394px;height:25px"></div>
<div class="cs" style="left:547px;top:394px;height:25px"></div>
<div class="cs" style="left:656px;top:394px;height:25px"></div>
<div class="cs" style="left:765px;top:394px;height:25px"></div>
<div class="cs" style="left:875px;top:394px;height:25px"></div>
<div class="cs" style="left:985px;top:394px;height:25px"></div>
<div class="cs" style="left:1542px;top:394px;height:25px"></div>
<span class="t" style="left:383px;top:402px;font-size:11.3px;font-weight:bold;color:#fff;transform:scaleX(0.987);">Day Of Week</span>
<span class="t" style="left:552.96px;top:402px;font-size:11.3px;font-weight:bold;color:#fff;transform:scaleX(1.011);"><span style="color:#b00000">*</span> Start Day</span>
<span class="t" style="left:662.05px;top:402px;font-size:11.3px;font-weight:bold;color:#fff;transform:scaleX(1.027);"><span style="color:#b00000">*</span> Start Time</span>
<span class="t" style="left:771.41px;top:402px;font-size:11.3px;font-weight:bold;color:#fff;transform:scaleX(0.979);"><span style="color:#b00000">*</span> End Day</span>
<span class="t" style="left:880.7px;top:402px;font-size:11.3px;font-weight:bold;color:#fff;transform:scaleX(0.977);"><span style="color:#b00000">*</span> End Time</span>
<div class="row" style="left:378px;top:420px;width:1182px;height:32px;background:#f9f9f9;border-right:1px solid #e0e0e0"></div>
<div class="a" style="left:511px;top:420px;width:1px;height:31px;background:#e2e2e2"></div>
<div class="a" style="left:547px;top:420px;width:1px;height:31px;background:#e2e2e2"></div>
<div class="a" style="left:657px;top:420px;width:1px;height:31px;background:#e2e2e2"></div>
<div class="a" style="left:767px;top:420px;width:1px;height:31px;background:#e2e2e2"></div>
<div class="a" style="left:877px;top:420px;width:1px;height:31px;background:#e2e2e2"></div>
<div class="a" style="left:987px;top:420px;width:1px;height:31px;background:#e2e2e2"></div>
<span class="t" style="left:382.9px;top:426px;font-size:11.3px;font-weight:bold;color:#1a1a1a;transform:scaleX(0.964);">Sunday</span>
<svg class="ic" style="left:492px;top:429px;width:11px;height:11px;fill:#333;"><use href="#i-plus"/></svg>
<svg class="ic" style="left:518.9px;top:425.8px;width:11.4px;height:11.4px;fill:#333;"><use href="#i-x"/></svg>
<div class="a" style="left:553px;top:424px;width:83px;height:24px;border:1px solid #a8a8a8;border-radius:2.5px;background:#fff"></div>
<span class="t" style="left:560.47px;top:430px;font-size:13.4px;transform:scaleX(0.927);">Today</span>
<svg class="ic" style="left:621px;top:433px;width:10px;height:7px" viewBox="0 0 10 7"><path d="M1 1l4 4 4-4" fill="none" stroke="#111" stroke-width="2"/></svg>
<div class="a" style="left:663px;top:424px;width:70px;height:22px;border:1px solid #bdbdbd;border-radius:2.5px;background:#fff"></div>
<span class="t" style="left:666.75px;top:430px;font-size:13.4px;transform:scaleX(0.902);">12:00 AM</span>
<svg class="ic" style="left:736px;top:426.5px;width:17px;height:17px;fill:#333;"><use href="#i-clock"/></svg>
<div class="a" style="left:773px;top:424px;width:86px;height:24px;border:1px solid #a8a8a8;border-radius:2.5px;background:#fff"></div>
<span class="t" style="left:780.47px;top:430px;font-size:13.4px;transform:scaleX(0.927);">Today</span>
<svg class="ic" style="left:844px;top:433px;width:10px;height:7px" viewBox="0 0 10 7"><path d="M1 1l4 4 4-4" fill="none" stroke="#111" stroke-width="2"/></svg>
<div class="a" style="left:883px;top:424px;width:70px;height:22px;border:1px solid #bdbdbd;border-radius:2.5px;background:#fff"></div>
<span class="t" style="left:886.75px;top:430px;font-size:13.4px;transform:scaleX(0.908);">11:30 PM</span>
<svg class="ic" style="left:956px;top:426.5px;width:17px;height:17px;fill:#333;"><use href="#i-clock"/></svg>
<svg class="ic" style="left:993px;top:424px;width:17px;height:17px;fill:#333;"><use href="#i-copy"/></svg>
<svg class="ic" style="left:1015px;top:424px;width:17px;height:17px;fill:#333;"><use href="#i-paste"/></svg>
<div class="row" style="left:378px;top:452px;width:1182px;height:32px;background:#fff;border-right:1px solid #e0e0e0"></div>
<div class="a" style="left:511px;top:452px;width:1px;height:31px;background:#e2e2e2"></div>
<div class="a" style="left:547px;top:452px;width:1px;height:31px;background:#e2e2e2"></div>
<div class="a" style="left:657px;top:452px;width:1px;height:31px;background:#e2e2e2"></div>
<div class="a" style="left:767px;top:452px;width:1px;height:31px;background:#e2e2e2"></div>
<div class="a" style="left:877px;top:452px;width:1px;height:31px;background:#e2e2e2"></div>
<div class="a" style="left:987px;top:452px;width:1px;height:31px;background:#e2e2e2"></div>
<span class="t" style="left:383.15px;top:458px;font-size:11.3px;font-weight:bold;color:#1a1a1a;transform:scaleX(1.015);">Monday</span>
<svg class="ic" style="left:492px;top:461px;width:11px;height:11px;fill:#333;"><use href="#i-plus"/></svg>
<svg class="ic" style="left:518.9px;top:457.8px;width:11.4px;height:11.4px;fill:#333;"><use href="#i-x"/></svg>
<div class="a" style="left:553px;top:456px;width:83px;height:24px;border:1px solid #a8a8a8;border-radius:2.5px;background:#fff"></div>
<span class="t" style="left:560.47px;top:462px;font-size:13.4px;transform:scaleX(0.927);">Today</span>
<svg class="ic" style="left:621px;top:465px;width:10px;height:7px" viewBox="0 0 10 7"><path d="M1 1l4 4 4-4" fill="none" stroke="#111" stroke-width="2"/></svg>
<div class="a" style="left:663px;top:456px;width:70px;height:22px;border:1px solid #bdbdbd;border-radius:2.5px;background:#fff"></div>
<span class="t" style="left:666.75px;top:462px;font-size:13.4px;transform:scaleX(0.902);">12:00 AM</span>
<svg class="ic" style="left:736px;top:458.5px;width:17px;height:17px;fill:#333;"><use href="#i-clock"/></svg>
<div class="a" style="left:773px;top:456px;width:86px;height:24px;border:1px solid #a8a8a8;border-radius:2.5px;background:#fff"></div>
<span class="t" style="left:780.47px;top:462px;font-size:13.4px;transform:scaleX(0.927);">Today</span>
<svg class="ic" style="left:844px;top:465px;width:10px;height:7px" viewBox="0 0 10 7"><path d="M1 1l4 4 4-4" fill="none" stroke="#111" stroke-width="2"/></svg>
<div class="a" style="left:883px;top:456px;width:70px;height:22px;border:1px solid #bdbdbd;border-radius:2.5px;background:#fff"></div>
<span class="t" style="left:886.75px;top:462px;font-size:13.4px;transform:scaleX(0.908);">11:30 PM</span>
<svg class="ic" style="left:956px;top:458.5px;width:17px;height:17px;fill:#333;"><use href="#i-clock"/></svg>
<svg class="ic" style="left:993px;top:456px;width:17px;height:17px;fill:#333;"><use href="#i-copy"/></svg>
<svg class="ic" style="left:1015px;top:456px;width:17px;height:17px;fill:#333;"><use href="#i-paste"/></svg>
<div class="row" style="left:378px;top:484px;width:1182px;height:32px;background:#f9f9f9;border-right:1px solid #e0e0e0"></div>
<div class="a" style="left:511px;top:484px;width:1px;height:31px;background:#e2e2e2"></div>
<div class="a" style="left:547px;top:484px;width:1px;height:31px;background:#e2e2e2"></div>
<div class="a" style="left:657px;top:484px;width:1px;height:31px;background:#e2e2e2"></div>
<div class="a" style="left:767px;top:484px;width:1px;height:31px;background:#e2e2e2"></div>
<div class="a" style="left:877px;top:484px;width:1px;height:31px;background:#e2e2e2"></div>
<div class="a" style="left:987px;top:484px;width:1px;height:31px;background:#e2e2e2"></div>
<span class="t" style="left:383.22px;top:490px;font-size:11.3px;font-weight:bold;color:#1a1a1a;transform:scaleX(0.967);">Tuesday</span>
<svg class="ic" style="left:492px;top:493px;width:11px;height:11px;fill:#333;"><use href="#i-plus"/></svg>
<svg class="ic" style="left:518.9px;top:489.8px;width:11.4px;height:11.4px;fill:#333;"><use href="#i-x"/></svg>
<div class="a" style="left:553px;top:488px;width:83px;height:24px;border:1px solid #a8a8a8;border-radius:2.5px;background:#fff"></div>
<span class="t" style="left:560.47px;top:494px;font-size:13.4px;transform:scaleX(0.927);">Today</span>
<svg class="ic" style="left:621px;top:497px;width:10px;height:7px" viewBox="0 0 10 7"><path d="M1 1l4 4 4-4" fill="none" stroke="#111" stroke-width="2"/></svg>
<div class="a" style="left:663px;top:488px;width:70px;height:22px;border:1px solid #bdbdbd;border-radius:2.5px;background:#fff"></div>
<span class="t" style="left:666.75px;top:494px;font-size:13.4px;transform:scaleX(0.902);">12:00 AM</span>
<svg class="ic" style="left:736px;top:490.5px;width:17px;height:17px;fill:#333;"><use href="#i-clock"/></svg>
<div class="a" style="left:773px;top:488px;width:86px;height:24px;border:1px solid #a8a8a8;border-radius:2.5px;background:#fff"></div>
<span class="t" style="left:780.47px;top:494px;font-size:13.4px;transform:scaleX(0.927);">Today</span>
<svg class="ic" style="left:844px;top:497px;width:10px;height:7px" viewBox="0 0 10 7"><path d="M1 1l4 4 4-4" fill="none" stroke="#111" stroke-width="2"/></svg>
<div class="a" style="left:883px;top:488px;width:70px;height:22px;border:1px solid #bdbdbd;border-radius:2.5px;background:#fff"></div>
<span class="t" style="left:886.75px;top:494px;font-size:13.4px;transform:scaleX(0.908);">11:30 PM</span>
<svg class="ic" style="left:956px;top:490.5px;width:17px;height:17px;fill:#333;"><use href="#i-clock"/></svg>
<svg class="ic" style="left:993px;top:488px;width:17px;height:17px;fill:#333;"><use href="#i-copy"/></svg>
<svg class="ic" style="left:1015px;top:488px;width:17px;height:17px;fill:#333;"><use href="#i-paste"/></svg>
<div class="row" style="left:378px;top:516px;width:1182px;height:32px;background:#fff;border-right:1px solid #e0e0e0"></div>
<div class="a" style="left:511px;top:516px;width:1px;height:31px;background:#e2e2e2"></div>
<div class="a" style="left:547px;top:516px;width:1px;height:31px;background:#e2e2e2"></div>
<div class="a" style="left:657px;top:516px;width:1px;height:31px;background:#e2e2e2"></div>
<div class="a" style="left:767px;top:516px;width:1px;height:31px;background:#e2e2e2"></div>
<div class="a" style="left:877px;top:516px;width:1px;height:31px;background:#e2e2e2"></div>
<div class="a" style="left:987px;top:516px;width:1px;height:31px;background:#e2e2e2"></div>
<span class="t" style="left:383.04px;top:522px;font-size:11.3px;font-weight:bold;color:#1a1a1a;transform:scaleX(0.975);">Wednesday</span>
<svg class="ic" style="left:492px;top:525px;width:11px;height:11px;fill:#333;"><use href="#i-plus"/></svg>
<svg class="ic" style="left:518.9px;top:521.8px;width:11.4px;height:11.4px;fill:#333;"><use href="#i-x"/></svg>
<div class="a" style="left:553px;top:520px;width:83px;height:24px;border:1px solid #a8a8a8;border-radius:2.5px;background:#fff"></div>
<span class="t" style="left:560.47px;top:526px;font-size:13.4px;transform:scaleX(0.927);">Today</span>
<svg class="ic" style="left:621px;top:529px;width:10px;height:7px" viewBox="0 0 10 7"><path d="M1 1l4 4 4-4" fill="none" stroke="#111" stroke-width="2"/></svg>
<div class="a" style="left:663px;top:520px;width:70px;height:22px;border:1px solid #bdbdbd;border-radius:2.5px;background:#fff"></div>
<span class="t" style="left:666.75px;top:526px;font-size:13.4px;transform:scaleX(0.902);">12:00 AM</span>
<svg class="ic" style="left:736px;top:522.5px;width:17px;height:17px;fill:#333;"><use href="#i-clock"/></svg>
<div class="a" style="left:773px;top:520px;width:86px;height:24px;border:1px solid #a8a8a8;border-radius:2.5px;background:#fff"></div>
<span class="t" style="left:780.47px;top:526px;font-size:13.4px;transform:scaleX(0.927);">Today</span>
<svg class="ic" style="left:844px;top:529px;width:10px;height:7px" viewBox="0 0 10 7"><path d="M1 1l4 4 4-4" fill="none" stroke="#111" stroke-width="2"/></svg>
<div class="a" style="left:883px;top:520px;width:70px;height:22px;border:1px solid #bdbdbd;border-radius:2.5px;background:#fff"></div>
<span class="t" style="left:886.75px;top:526px;font-size:13.4px;transform:scaleX(0.908);">11:30 PM</span>
<svg class="ic" style="left:956px;top:522.5px;width:17px;height:17px;fill:#333;"><use href="#i-clock"/></svg>
<svg class="ic" style="left:993px;top:520px;width:17px;height:17px;fill:#333;"><use href="#i-copy"/></svg>
<svg class="ic" style="left:1015px;top:520px;width:17px;height:17px;fill:#333;"><use href="#i-paste"/></svg>
<div class="row" style="left:378px;top:548px;width:1182px;height:32px;background:#f9f9f9;border-right:1px solid #e0e0e0"></div>
<div class="a" style="left:511px;top:548px;width:1px;height:31px;background:#e2e2e2"></div>
<div class="a" style="left:547px;top:548px;width:1px;height:31px;background:#e2e2e2"></div>
<div class="a" style="left:657px;top:548px;width:1px;height:31px;background:#e2e2e2"></div>
<div class="a" style="left:767px;top:548px;width:1px;height:31px;background:#e2e2e2"></div>
<div class="a" style="left:877px;top:548px;width:1px;height:31px;background:#e2e2e2"></div>
<div class="a" style="left:987px;top:548px;width:1px;height:31px;background:#e2e2e2"></div>
<span class="t" style="left:383.2px;top:554px;font-size:11.3px;font-weight:bold;color:#1a1a1a;transform:scaleX(0.972);">Thursday</span>
<svg class="ic" style="left:492px;top:557px;width:11px;height:11px;fill:#333;"><use href="#i-plus"/></svg>
<svg class="ic" style="left:518.9px;top:553.8px;width:11.4px;height:11.4px;fill:#333;"><use href="#i-x"/></svg>
<div class="a" style="left:553px;top:552px;width:83px;height:24px;border:1px solid #a8a8a8;border-radius:2.5px;background:#fff"></div>
<span class="t" style="left:560.47px;top:558px;font-size:13.4px;transform:scaleX(0.927);">Today</span>
<svg class="ic" style="left:621px;top:561px;width:10px;height:7px" viewBox="0 0 10 7"><path d="M1 1l4 4 4-4" fill="none" stroke="#111" stroke-width="2"/></svg>
<div class="a" style="left:663px;top:552px;width:70px;height:22px;border:1px solid #bdbdbd;border-radius:2.5px;background:#fff"></div>
<span class="t" style="left:666.75px;top:558px;font-size:13.4px;transform:scaleX(0.902);">12:00 AM</span>
<svg class="ic" style="left:736px;top:554.5px;width:17px;height:17px;fill:#333;"><use href="#i-clock"/></svg>
<div class="a" style="left:773px;top:552px;width:86px;height:24px;border:1px solid #a8a8a8;border-radius:2.5px;background:#fff"></div>
<span class="t" style="left:780.47px;top:558px;font-size:13.4px;transform:scaleX(0.927);">Today</span>
<svg class="ic" style="left:844px;top:561px;width:10px;height:7px" viewBox="0 0 10 7"><path d="M1 1l4 4 4-4" fill="none" stroke="#111" stroke-width="2"/></svg>
<div class="a" style="left:883px;top:552px;width:70px;height:22px;border:1px solid #bdbdbd;border-radius:2.5px;background:#fff"></div>
<span class="t" style="left:886.75px;top:558px;font-size:13.4px;transform:scaleX(0.908);">11:30 PM</span>
<svg class="ic" style="left:956px;top:554.5px;width:17px;height:17px;fill:#333;"><use href="#i-clock"/></svg>
<svg class="ic" style="left:993px;top:552px;width:17px;height:17px;fill:#333;"><use href="#i-copy"/></svg>
<svg class="ic" style="left:1015px;top:552px;width:17px;height:17px;fill:#333;"><use href="#i-paste"/></svg>
<div class="row" style="left:378px;top:580px;width:1182px;height:32px;background:#fff;border-right:1px solid #e0e0e0"></div>
<div class="a" style="left:511px;top:580px;width:1px;height:31px;background:#e2e2e2"></div>
<div class="a" style="left:547px;top:580px;width:1px;height:31px;background:#e2e2e2"></div>
<div class="a" style="left:657px;top:580px;width:1px;height:31px;background:#e2e2e2"></div>
<div class="a" style="left:767px;top:580px;width:1px;height:31px;background:#e2e2e2"></div>
<div class="a" style="left:877px;top:580px;width:1px;height:31px;background:#e2e2e2"></div>
<div class="a" style="left:987px;top:580px;width:1px;height:31px;background:#e2e2e2"></div>
<span class="t" style="left:383.05px;top:586px;font-size:11.3px;font-weight:bold;color:#1a1a1a;transform:scaleX(1.004);">Friday</span>
<svg class="ic" style="left:492px;top:589px;width:11px;height:11px;fill:#333;"><use href="#i-plus"/></svg>
<svg class="ic" style="left:518.9px;top:585.8px;width:11.4px;height:11.4px;fill:#333;"><use href="#i-x"/></svg>
<div class="a" style="left:553px;top:584px;width:83px;height:24px;border:1px solid #a8a8a8;border-radius:2.5px;background:#fff"></div>
<span class="t" style="left:560.47px;top:590px;font-size:13.4px;transform:scaleX(0.927);">Today</span>
<svg class="ic" style="left:621px;top:593px;width:10px;height:7px" viewBox="0 0 10 7"><path d="M1 1l4 4 4-4" fill="none" stroke="#111" stroke-width="2"/></svg>
<div class="a" style="left:663px;top:584px;width:70px;height:22px;border:1px solid #bdbdbd;border-radius:2.5px;background:#fff"></div>
<span class="t" style="left:666.75px;top:590px;font-size:13.4px;transform:scaleX(0.902);">12:00 AM</span>
<svg class="ic" style="left:736px;top:586.5px;width:17px;height:17px;fill:#333;"><use href="#i-clock"/></svg>
<div class="a" style="left:773px;top:584px;width:86px;height:24px;border:1px solid #a8a8a8;border-radius:2.5px;background:#fff"></div>
<span class="t" style="left:780.47px;top:590px;font-size:13.4px;transform:scaleX(0.927);">Today</span>
<svg class="ic" style="left:844px;top:593px;width:10px;height:7px" viewBox="0 0 10 7"><path d="M1 1l4 4 4-4" fill="none" stroke="#111" stroke-width="2"/></svg>
<div class="a" style="left:883px;top:584px;width:70px;height:22px;border:1px solid #bdbdbd;border-radius:2.5px;background:#fff"></div>
<span class="t" style="left:886.75px;top:590px;font-size:13.4px;transform:scaleX(0.908);">11:30 PM</span>
<svg class="ic" style="left:956px;top:586.5px;width:17px;height:17px;fill:#333;"><use href="#i-clock"/></svg>
<svg class="ic" style="left:993px;top:584px;width:17px;height:17px;fill:#333;"><use href="#i-copy"/></svg>
<svg class="ic" style="left:1015px;top:584px;width:17px;height:17px;fill:#333;"><use href="#i-paste"/></svg>
<div class="row" style="left:378px;top:612px;width:1182px;height:32px;background:#f9f9f9;border-right:1px solid #e0e0e0"></div>
<div class="a" style="left:511px;top:612px;width:1px;height:31px;background:#e2e2e2"></div>
<div class="a" style="left:547px;top:612px;width:1px;height:31px;background:#e2e2e2"></div>
<div class="a" style="left:657px;top:612px;width:1px;height:31px;background:#e2e2e2"></div>
<div class="a" style="left:767px;top:612px;width:1px;height:31px;background:#e2e2e2"></div>
<div class="a" style="left:877px;top:612px;width:1px;height:31px;background:#e2e2e2"></div>
<div class="a" style="left:987px;top:612px;width:1px;height:31px;background:#e2e2e2"></div>
<span class="t" style="left:383.43px;top:618px;font-size:11.3px;font-weight:bold;color:#1a1a1a;">Saturday</span>
<svg class="ic" style="left:492px;top:621px;width:11px;height:11px;fill:#333;"><use href="#i-plus"/></svg>
<svg class="ic" style="left:518.9px;top:617.8px;width:11.4px;height:11.4px;fill:#333;"><use href="#i-x"/></svg>
<div class="a" style="left:553px;top:616px;width:83px;height:24px;border:1px solid #a8a8a8;border-radius:2.5px;background:#fff"></div>
<span class="t" style="left:560.47px;top:622px;font-size:13.4px;transform:scaleX(0.927);">Today</span>
<svg class="ic" style="left:621px;top:625px;width:10px;height:7px" viewBox="0 0 10 7"><path d="M1 1l4 4 4-4" fill="none" stroke="#111" stroke-width="2"/></svg>
<div class="a" style="left:663px;top:616px;width:70px;height:22px;border:1px solid #bdbdbd;border-radius:2.5px;background:#fff"></div>
<span class="t" style="left:666.75px;top:622px;font-size:13.4px;transform:scaleX(0.902);">12:00 AM</span>
<svg class="ic" style="left:736px;top:618.5px;width:17px;height:17px;fill:#333;"><use href="#i-clock"/></svg>
<div class="a" style="left:773px;top:616px;width:86px;height:24px;border:1px solid #a8a8a8;border-radius:2.5px;background:#fff"></div>
<span class="t" style="left:780.47px;top:622px;font-size:13.4px;transform:scaleX(0.927);">Today</span>
<svg class="ic" style="left:844px;top:625px;width:10px;height:7px" viewBox="0 0 10 7"><path d="M1 1l4 4 4-4" fill="none" stroke="#111" stroke-width="2"/></svg>
<div class="a" style="left:883px;top:616px;width:70px;height:22px;border:1px solid #bdbdbd;border-radius:2.5px;background:#fff"></div>
<span class="t" style="left:886.75px;top:622px;font-size:13.4px;transform:scaleX(0.908);">11:30 PM</span>
<svg class="ic" style="left:956px;top:618.5px;width:17px;height:17px;fill:#333;"><use href="#i-clock"/></svg>
<svg class="ic" style="left:993px;top:616px;width:17px;height:17px;fill:#333;"><use href="#i-copy"/></svg>
<svg class="ic" style="left:1015px;top:616px;width:17px;height:17px;fill:#333;"><use href="#i-paste"/></svg>
<div class="a" style="left:1511px;top:687px;width:49px;height:30px;background:#03566b;border-radius:4px"></div>
<span class="t" style="left:1520.42px;top:695px;font-size:14.4px;color:#fff;transform:scaleX(0.906);">Save</span>
<div class="a" style="left:373px;top:740px;width:1226px;height:1px;background:#c5c5dd"></div>
<div class="a" style="left:1385px;top:747px;width:47px;height:30px;background:#03566b;border-radius:4px"></div>
<span class="t" style="left:1394.21px;top:755px;font-size:14.4px;color:#fff;transform:scaleX(0.957);">New</span>
<div class="a" style="left:1443px;top:747px;width:140px;height:30px;background:#03566b;border-radius:4px"></div>
<span class="t" style="left:1453.38px;top:755px;font-size:14.4px;color:#fff;transform:scaleX(0.972);">New from Template</span>
</div></body></html>
